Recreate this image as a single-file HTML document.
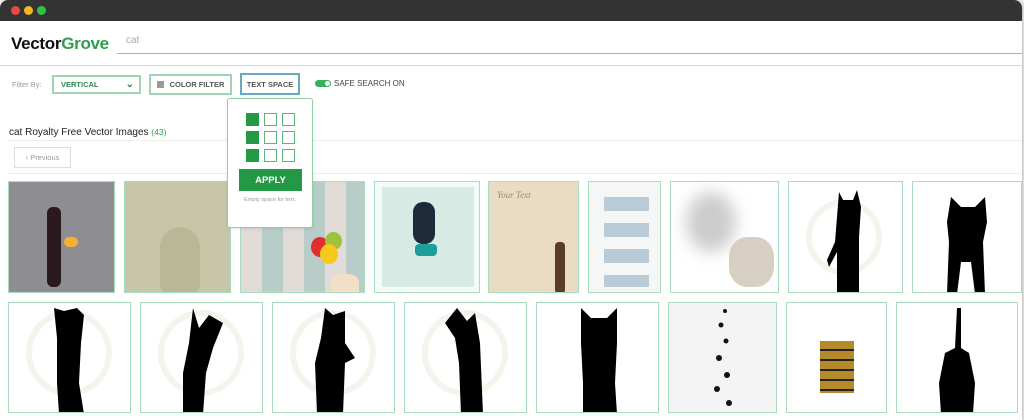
<!DOCTYPE html>
<html><head><meta charset="utf-8"><style>
*{margin:0;padding:0;box-sizing:border-box}
body{width:1024px;height:420px;background:#f1f1f1;font-family:"Liberation Sans",sans-serif;position:relative;overflow:hidden}
.win{position:absolute;left:0;top:0;width:1022px;height:420px;background:#fff;border-radius:8px 8px 0 0;overflow:hidden;box-shadow:1px 0 3px rgba(0,0,0,.25)}
.bar{height:21px;background:#333}
.dot{position:absolute;top:6px;width:9px;height:9px;border-radius:50%}
.a{position:absolute}
.t{position:absolute;border:1px solid #a9dcbc;overflow:hidden}
.btn{position:absolute;border:2px solid #9fd4b2;font-size:7.5px;font-weight:bold;color:#555;display:flex;align-items:center;justify-content:center;background:#fff}
.sq{position:absolute;width:13px;height:13px;border:1px solid #5fb47e}
.sq.f{background:#239845;border-color:#239845}
</style></head><body>
<div class="win">
<div class="bar"></div>
<div class="dot" style="left:11px;background:#e9493f"></div>
<div class="dot" style="left:24px;background:#f2b62b"></div>
<div class="dot" style="left:37px;background:#2ec440"></div>
<div class="a" style="left:11px;top:34px;font-size:17px;font-weight:bold;letter-spacing:-0.3px;color:#111">Vec<span style="color:#111">t</span>or<span style="color:#2f9d4e">Grove</span></div>
<div class="a" style="left:126px;top:35px;font-size:10px;color:#aaa">cat</div>
<div class="a" style="left:117px;top:53px;width:905px;height:1px;background:#7ccc97"></div>
<div class="a" style="left:0;top:65px;width:1022px;height:1px;background:#bfe4cc"></div>
<div class="a" style="left:12px;top:80px;font-size:7.5px;color:#999">Filter By:</div>
<div class="btn" style="left:52px;top:75px;width:89px;height:19px;justify-content:flex-start;padding-left:7px;color:#2f8a4e">VERTICAL<span style="position:absolute;right:5px;top:2px;font-size:10px">⌄</span></div>
<div class="btn" style="left:149px;top:74px;width:83px;height:21px"><span style="display:inline-block;width:7px;height:7px;background:#999;margin-right:6px"></span>COLOR FILTER</div>
<div class="btn" style="left:240px;top:73px;width:60px;height:22px;border-color:#6aa9bd">TEXT SPACE</div>
<div class="a" style="left:315px;top:80px;width:15px;height:7px;border-radius:4px;background:#38b15c"></div>
<div class="a" style="left:324px;top:80px;width:7px;height:7px;border-radius:50%;background:#fff;border:1px solid #38b15c"></div>
<div class="a" style="left:334px;top:79px;font-size:8px;color:#444">SAFE SEARCH ON</div>
<div class="a" style="left:9px;top:127px;font-size:10px;color:#222">cat Royalty Free Vector Images <span style="color:#2f9d4e;font-size:8.5px">(43)</span></div>
<div class="a" style="left:8px;top:140px;width:1014px;height:1px;background:#eee"></div>
<div class="btn" style="left:14px;top:147px;width:57px;height:21px;font-weight:normal;color:#999;border-color:#ddd;border-width:1px">‹ Previous</div>
<div class="a" style="left:8px;top:173px;width:1014px;height:1px;background:#eee"></div>

<div class="t" style="left:8px;top:181px;width:107px;height:112px;background:#8d8d92"><div class="a" style="left:38px;top:25px;width:14px;height:80px;background:#2a1a1f;border-radius:6px"></div><div class="a" style="left:55px;top:55px;width:14px;height:10px;background:#f4b030;border-radius:5px"></div></div>
<div class="t" style="left:124px;top:181px;width:107px;height:112px;background:#c8c6a8"><div class="a" style="left:35px;top:45px;width:40px;height:67px;background:#b9b795;border-radius:20px 20px 10px 10px"></div></div>
<div class="t" style="left:240px;top:181px;width:125px;height:112px;background:repeating-linear-gradient(90deg,#e2dcd8 0 21px,#b8cdc8 21px 42px)"><div class="a" style="left:70px;top:55px;width:18px;height:20px;border-radius:50%;background:#e12d2d"></div><div class="a" style="left:84px;top:50px;width:17px;height:18px;border-radius:50%;background:#9cc33b"></div><div class="a" style="left:79px;top:62px;width:18px;height:20px;border-radius:50%;background:#f7c91a"></div><div class="a" style="left:90px;top:92px;width:28px;height:20px;border-radius:40% 40% 0 0;background:#f3dfc6"></div></div>
<div class="t" style="left:374px;top:181px;width:106px;height:112px;background:#f4fbf8"><div class="a" style="left:7px;top:5px;width:92px;height:100px;background:#d7ebe4"></div><div class="a" style="left:38px;top:20px;width:22px;height:42px;background:#1e2a3a;border-radius:10px"></div><div class="a" style="left:40px;top:62px;width:22px;height:12px;background:#1d9e9a;border-radius:4px"></div></div>
<div class="t" style="left:488px;top:181px;width:91px;height:112px;background:#eadbc3"><div class="a" style="left:8px;top:8px;font-size:9px;font-style:italic;color:#9b8a72;font-family:'Liberation Serif',serif">Your Text</div><div class="a" style="left:66px;top:60px;width:10px;height:52px;background:#5a3a2a;border-radius:4px"></div></div>
<div class="t" style="left:588px;top:181px;width:73px;height:112px;background:#f5f7f6"><div class="a" style="left:15px;top:15px;width:45px;height:90px;background:repeating-linear-gradient(180deg,#b8cbd6 0 14px,#f5f7f6 14px 26px)"></div></div>
<div class="t" style="left:670px;top:181px;width:109px;height:112px;background:#fff"><div class="a" style="left:15px;top:10px;width:50px;height:60px;background:#ccc;filter:blur(8px);border-radius:50%"></div><div class="a" style="left:58px;top:55px;width:45px;height:50px;background:#d8cfc3;border-radius:40%"></div></div>
<div class="t" style="left:788px;top:181px;width:115px;height:112px;background:#fff"><svg width="115" height="112"><circle cx="55" cy="55" r="35" fill="none" stroke="#f5f3ec" stroke-width="6"/><path d="M50 10 L54 18 L64 18 L68 8 L72 25 L70 55 L70 112 L48 112 L48 70 L40 85 L38 78 L46 60 Z" fill="#000"/></svg></div>
<div class="t" style="left:912px;top:181px;width:110px;height:112px;background:#fff"><svg width="110" height="112"><path d="M38 15 L48 25 L62 25 L72 15 L74 40 L70 60 L72 112 L62 112 L58 80 L48 80 L44 112 L34 112 L36 60 L34 40 Z" fill="#000"/></svg></div>

<div class="t" style="left:8px;top:302px;width:123px;height:111px"><svg width="123" height="111"><circle cx="60" cy="50" r="40" fill="none" stroke="#f5f3ec" stroke-width="6"/><path d="M45 5 L55 8 L68 5 L75 12 L72 40 L70 80 L75 111 L50 111 L48 80 L48 35 Z" fill="#000"/></svg></div>
<div class="t" style="left:140px;top:302px;width:123px;height:111px"><svg width="123" height="111"><circle cx="60" cy="50" r="40" fill="none" stroke="#f5f3ec" stroke-width="6"/><path d="M52 5 L58 25 L68 12 L82 20 L72 45 L65 70 L62 111 L42 111 L42 70 L48 40 Z" fill="#000"/></svg></div>
<div class="t" style="left:272px;top:302px;width:123px;height:111px"><svg width="123" height="111"><circle cx="60" cy="50" r="40" fill="none" stroke="#f5f3ec" stroke-width="6"/><path d="M52 5 L60 12 L72 8 L72 40 L82 55 L72 60 L70 111 L44 111 L42 60 L48 35 Z" fill="#000"/></svg></div>
<div class="t" style="left:404px;top:302px;width:123px;height:111px"><svg width="123" height="111"><circle cx="60" cy="50" r="40" fill="none" stroke="#f5f3ec" stroke-width="6"/><path d="M40 20 L52 5 L62 18 L70 10 L75 40 L78 111 L56 111 L54 60 L50 35 Z" fill="#000"/></svg></div>
<div class="t" style="left:536px;top:302px;width:123px;height:111px"><svg width="123" height="111"><path d="M44 5 L54 15 L70 15 L80 5 L80 40 L78 80 L80 111 L46 111 L46 80 L44 40 Z" fill="#000"/></svg></div>
<div class="t" style="left:668px;top:302px;width:109px;height:111px;background:#f4f4f4"><svg width="109" height="111" fill="#111"><circle cx="56" cy="8" r="2"/><circle cx="52" cy="22" r="2.5"/><circle cx="57" cy="38" r="2.5"/><circle cx="50" cy="55" r="3"/><circle cx="58" cy="72" r="3"/><circle cx="48" cy="86" r="3"/><circle cx="60" cy="100" r="3"/></svg></div>
<div class="t" style="left:786px;top:302px;width:101px;height:111px"><div class="a" style="left:33px;top:38px;width:34px;height:52px;background:repeating-linear-gradient(180deg,#b58a2a 0 8px,#222 8px 10px)"></div></div>
<div class="t" style="left:896px;top:302px;width:122px;height:111px"><svg width="122" height="111"><path d="M60 5 L64 5 L64 45 L72 50 L78 80 L76 111 L44 111 L42 80 L48 50 L58 45 Z" fill="#000"/></svg></div>

<div class="a" style="left:227px;top:98px;width:86px;height:130px;background:#fff;border:1px solid #8fd1a6;border-radius:3px;box-shadow:0 1px 3px rgba(0,0,0,.1)">
<div class="sq f" style="left:18px;top:14px"></div><div class="sq" style="left:36px;top:14px"></div><div class="sq" style="left:54px;top:14px"></div>
<div class="sq f" style="left:18px;top:32px"></div><div class="sq" style="left:36px;top:32px"></div><div class="sq" style="left:54px;top:32px"></div>
<div class="sq f" style="left:18px;top:50px"></div><div class="sq" style="left:36px;top:50px"></div><div class="sq" style="left:54px;top:50px"></div>
<div class="a" style="left:11px;top:70px;width:63px;height:22px;background:#239845;color:#fff;font-weight:bold;font-size:9.5px;display:flex;align-items:center;justify-content:center">APPLY</div>
<div class="a" style="left:0;width:84px;top:98px;text-align:center;font-size:5.5px;color:#999">Empty space for text.</div>
</div>
</div>
</body></html>
